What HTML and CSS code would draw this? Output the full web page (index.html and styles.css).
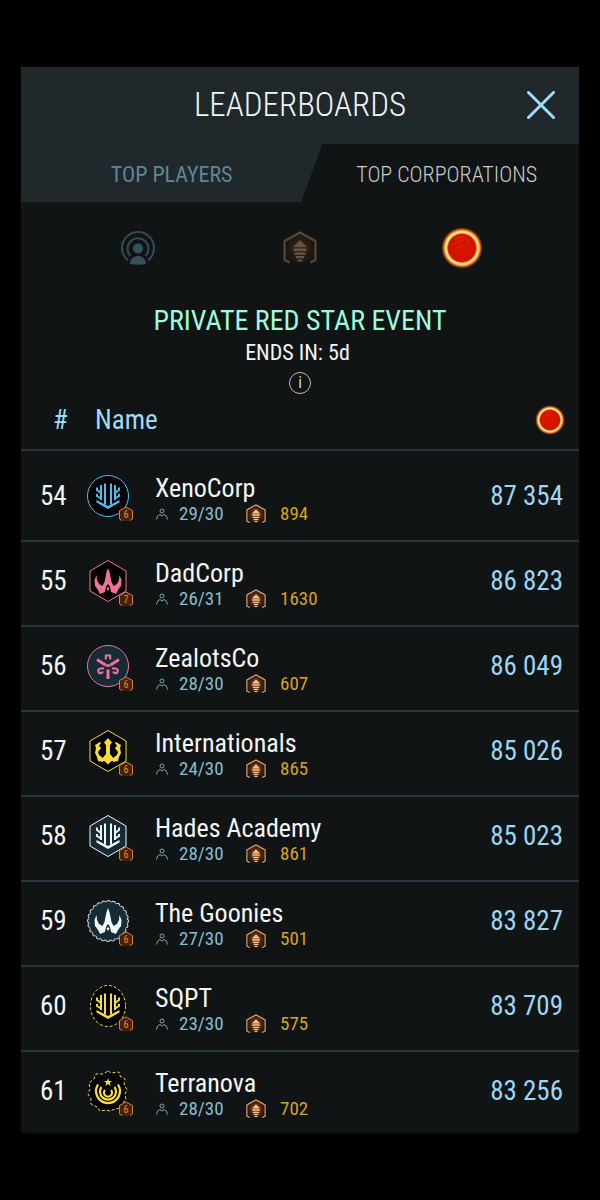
FILE: index.html
```html
<!DOCTYPE html>
<html lang="en">
<head>
<meta charset="utf-8">
<meta name="viewport" content="width=device-width, initial-scale=1">
<title>Leaderboards</title>
<link rel="stylesheet" href="styles.css">
</head>
<body>
<svg class="sprite" aria-hidden="true">
  <defs>
    <radialGradient id="starFill">
      <stop offset="0" stop-color="#dc1600"/>
      <stop offset=".64" stop-color="#d01200"/>
      <stop offset=".69" stop-color="#f0701c"/>
      <stop offset=".73" stop-color="#ffeb98"/>
      <stop offset=".79" stop-color="#ffe08a"/>
      <stop offset=".85" stop-color="#f08a26"/>
      <stop offset=".92" stop-color="#b04606" stop-opacity=".75"/>
      <stop offset="1" stop-color="#601c00" stop-opacity="0"/>
    </radialGradient>
    <radialGradient id="glow">
      <stop offset="0" stop-color="#b4591c" stop-opacity=".9"/>
      <stop offset="1" stop-color="#6a2e0a" stop-opacity=".2"/>
    </radialGradient>
    <symbol id="star" viewBox="0 0 42 42">
      <circle cx="21" cy="21" r="21" fill="url(#starFill)"/>
      <path d="M14 13q4-4 9-3M12 18l4-3M18 14l5-1M25 12l3 3M20 18l-3 3" fill="none" stroke="#f0501c" stroke-width="1.4" opacity=".3"/>
    </symbol>
    <symbol id="influence" viewBox="0 0 34 34">
      <circle cx="17" cy="17" r="16" fill="url(#glow)"/>
      <path d="M6.500 31.500L1.500 29V10L17 1.500L32.500 10V29L27.500 31.500" fill="none" stroke="#e0a071" stroke-width="2"/>
      <path d="M17 9l7 7H10zM10.500 17.500h13v2.500h-13zM11.500 21.500h11v2.200h-11zM13 25h8v2.200h-8zM14.500 28.500h5v2h-5z" fill="#f2c08a"/>
    </symbol>
    <symbol id="person" viewBox="0 0 12 12">
      <circle cx="6" cy="3" r="2" fill="none" stroke="#79a5b5"/>
      <path d="M.5 11.500Q1 7 4 6.500L6 8L8 6.500Q11 7 11.500 11.500" fill="none" stroke="#79a5b5"/>
    </symbol>
    <symbol id="rank" viewBox="0 0 16 16">
      <path d="M8 1l6.500 3.500v8.500L12 15H4l-2.500-2V4.500z" fill="#4a2006"/>
      <path d="M4 14.500L1.500 13V4.500L8 1l6.500 3.500V13L12 14.500" fill="none" stroke="#c98152"/>
    </symbol>

    <path id="circle" d="M21 .5a20.500 20.500 0 1 1 0 41a20.500 20.500 0 1 1 0-41z"/>
    <path id="hexagon" d="M21 .5L39 11V31L21 41.500L3 31V11z"/>

    <g id="trident">
      <path d="M18 8.500v21M24 8.500v21M14 10v15M28 10v15M10 12.500v2.500l4 3M32 12.500v2.500l-4 3M10 19v2l4 2.500M32 19v2l-4 2.500" fill="none" stroke="currentColor" stroke-width="2"/>
      <path d="M9.500 25L21 31l11.500-6v2.500L21 34L9.500 27.500z" fill="currentColor"/>
    </g>
    <path id="phoenix" d="M21 8L19.500 12L18.500 17L17.500 22L15.500 26L12 24L10 20L9.500 15L7.500 20L8 26L11 30L13 34L18 32L18.500 29L19.500 26L21 24L22.500 26L23.500 29L24 32L29 34L31 30L34 26L34.500 20L32.500 15L32 20L30 24L26.500 26L24.500 22L23.500 17L22.500 12ZM19.500 28.500L21 27L22.500 28.500L21 31Z" fill="currentColor"/>
    <g id="crest" fill="currentColor">
      <path d="M21 8l4 4.500-2 2.500v9l3 3.500 1 3-3 1-3 3-3-3-3-1 1-3 3-3.500v-9l-2-2.500z"/>
      <path d="M13 12l1 1-2 3 2 2-3 4 1 3 4 3v4l-5-1-1-4-2-4 1-5-1-3zM29 12l-1 1 2 3-2 2 3 4-1 3-4 3v4l5-1 1-4 2-4-1-5 1-3z"/>
    </g>
    <g id="bloom" fill="none" stroke="currentColor">
      <path d="M21 24.500v9.500M10 14.500l8.500 5.500M32 14.500L23.500 20" stroke-width="3"/>
      <path d="M18.800 14.500v-4h4.400v4" stroke-width="2"/>
      <path d="M18.500 20.500h5" stroke-width="2.500"/>
      <path d="M17 23.500c-4-1-6.500 1-5.500 3.500 1 2 3.500 1.500 4.500-.5M25 23.500c4-1 6.500 1 5.500 3.500-1 2-3.500 1.500-4.500-.5" stroke-width="2"/>
    </g>
    <g id="rings" fill="none" stroke="currentColor" stroke-width="2.200">
      <path d="M11 14.500a12 12 0 1 0 20 0M14.500 17a8 8 0 1 0 13 0M18 20a4 4 0 1 0 6 0"/>
      <path d="M21 8l1 3h3l-2.200 1.800 1 3.200-2.800-2-2.800 2 1-3.200L17 11h3z" fill="currentColor" stroke="none"/>
    </g>
  </defs>
</svg>

<main class="panel">
  <header class="titlebar">
    <h1>LEADERBOARDS</h1>
    <button class="close" type="button" aria-label="Close">
      <svg viewBox="0 0 28 28" aria-hidden="true"><path d="M1.500 1.500l25 25M26.500 1.500l-25 25"/></svg>
    </button>
  </header>

  <div class="tabs" role="tablist">
    <button class="tab tab-players" type="button" role="tab" aria-selected="false">TOP PLAYERS</button>
    <button class="tab tab-corps" type="button" role="tab" aria-selected="true">TOP CORPORATIONS</button>
  </div>

  <div class="filters">
    <button type="button" aria-label="Reach">
      <svg class="reach" viewBox="0 0 34 34" aria-hidden="true">
        <g fill="none" stroke="#334a54" stroke-width="2">
          <path d="M7 29.500A16 16 0 1 1 27 29.500"/>
          <path d="M9.500 25A10.500 10.500 0 1 1 24.500 25"/>
        </g>
        <circle cx="17" cy="17.500" r="5" fill="#36515d"/>
        <path d="M9 33q1-8 8-8t8 8q-8 1.500-16 0z" fill="#36515d"/>
      </svg>
    </button>
    <button type="button" aria-label="Influence"><svg class="dim" aria-hidden="true"><use href="#influence"/></svg></button>
    <button type="button" aria-label="Red star" aria-pressed="true"><svg class="star-large" aria-hidden="true"><use href="#star"/></svg></button>
  </div>

  <section class="event">
    <h2>PRIVATE RED STAR EVENT</h2>
    <p>ENDS IN: 5d</p>
    <button class="info" type="button" aria-label="Event information">i</button>
  </section>

  <table class="board">
    <colgroup><col class="col-rank"><col class="col-emblem"><col><col class="col-score"></colgroup>
    <thead>
      <tr><th class="rank" scope="col">#</th><th class="name-head" colspan="2" scope="col">Name</th><th class="score" scope="col" aria-label="Red star score"><svg class="star-small" aria-hidden="true"><use href="#star"/></svg></th></tr>
    </thead>
    <tbody>
      <tr>
        <td class="rank">54</td>
        <td><svg class="emblem blue" viewBox="0 0 48 48"><use href="#circle" class="plate"/><use href="#trident"/><use href="#rank" x="31" y="31" width="16" height="16"/><text x="39" y="43">6</text></svg></td>
        <td class="corp"><div class="name">XenoCorp</div><div class="meta"><svg class="person"><use href="#person"/></svg><span class="members">29/30</span><svg class="influence"><use href="#influence"/></svg><span class="points">894</span></div></td>
        <td class="score">87 354</td>
      </tr>
      <tr>
        <td class="rank">55</td>
        <td><svg class="emblem pink" viewBox="0 0 48 48"><use href="#hexagon" class="plate"/><use href="#phoenix"/><use href="#rank" x="31" y="31" width="16" height="16"/><text x="39" y="43">7</text></svg></td>
        <td class="corp"><div class="name">DadCorp</div><div class="meta"><svg class="person"><use href="#person"/></svg><span class="members">26/31</span><svg class="influence"><use href="#influence"/></svg><span class="points">1630</span></div></td>
        <td class="score">86 823</td>
      </tr>
      <tr>
        <td class="rank">56</td>
        <td><svg class="emblem pink slate" viewBox="0 0 48 48"><use href="#circle" class="plate"/><use href="#bloom"/><use href="#rank" x="31" y="31" width="16" height="16"/><text x="39" y="43">6</text></svg></td>
        <td class="corp"><div class="name">ZealotsCo</div><div class="meta"><svg class="person"><use href="#person"/></svg><span class="members">28/30</span><svg class="influence"><use href="#influence"/></svg><span class="points">607</span></div></td>
        <td class="score">86 049</td>
      </tr>
      <tr>
        <td class="rank">57</td>
        <td><svg class="emblem yellow" viewBox="0 0 48 48"><use href="#hexagon" class="plate"/><use href="#crest"/><use href="#rank" x="31" y="31" width="16" height="16"/><text x="39" y="43">6</text></svg></td>
        <td class="corp"><div class="name">Internationals</div><div class="meta"><svg class="person"><use href="#person"/></svg><span class="members">24/30</span><svg class="influence"><use href="#influence"/></svg><span class="points">865</span></div></td>
        <td class="score">85 026</td>
      </tr>
      <tr>
        <td class="rank">58</td>
        <td><svg class="emblem white slate" viewBox="0 0 48 48"><use href="#hexagon" class="plate"/><use href="#trident"/><use href="#rank" x="31" y="31" width="16" height="16"/><text x="39" y="43">6</text></svg></td>
        <td class="corp"><div class="name">Hades Academy</div><div class="meta"><svg class="person"><use href="#person"/></svg><span class="members">28/30</span><svg class="influence"><use href="#influence"/></svg><span class="points">861</span></div></td>
        <td class="score">85 023</td>
      </tr>
      <tr>
        <td class="rank">59</td>
        <td><svg class="emblem white slate" viewBox="0 0 48 48"><circle class="scallop" cx="21" cy="21" r="18.500"/><circle class="scallop-fill" cx="21" cy="21" r="18.500"/><circle class="backing" cx="21" cy="21" r="19"/><use href="#phoenix"/><use href="#rank" x="31" y="31" width="16" height="16"/><text x="39" y="43">6</text></svg></td>
        <td class="corp"><div class="name">The Goonies</div><div class="meta"><svg class="person"><use href="#person"/></svg><span class="members">27/30</span><svg class="influence"><use href="#influence"/></svg><span class="points">501</span></div></td>
        <td class="score">83 827</td>
      </tr>
      <tr>
        <td class="rank">60</td>
        <td><svg class="emblem yellow dashed" viewBox="0 0 48 48"><ellipse class="plate" cx="21" cy="21" rx="17.500" ry="20.500"/><use href="#trident"/><use href="#rank" x="31" y="31" width="16" height="16"/><text x="39" y="43">6</text></svg></td>
        <td class="corp"><div class="name">SQPT</div><div class="meta"><svg class="person"><use href="#person"/></svg><span class="members">23/30</span><svg class="influence"><use href="#influence"/></svg><span class="points">575</span></div></td>
        <td class="score">83 709</td>
      </tr>
      <tr>
        <td class="rank">61</td>
        <td><svg class="emblem yellow dashed" viewBox="0 0 48 48"><path class="plate" d="M21 1l3 2 8-1 1 4 5 3-1 5 3 6-2 4 1 6-4 3-2 5-5 1-5 2-4-1-6 1-3-4-6-3v-5l-3-5 2-5-1-6 5-4 2-5 7 0z"/><use href="#rings"/><use href="#rank" x="31" y="31" width="16" height="16"/><text x="39" y="43">6</text></svg></td>
        <td class="corp"><div class="name">Terranova</div><div class="meta"><svg class="person"><use href="#person"/></svg><span class="members">28/30</span><svg class="influence"><use href="#influence"/></svg><span class="points">702</span></div></td>
        <td class="score">83 256</td>
      </tr>
    </tbody>
  </table>
</main>
</body>
</html>
```

FILE: styles.css
```css
* { box-sizing: border-box; }

body {
  margin: 0;
  padding: 67px 21px;
  background: #000;
  color: #f4f6f6;
  font-family: "Roboto Condensed", Roboto, "Liberation Sans", sans-serif;
}

button {
  padding: 0;
  border: 0;
  background: none;
  color: inherit;
  font: inherit;
  cursor: pointer;
}

svg { display: block; }

.sprite { position: absolute; width: 0; height: 0; }

.panel { background: #101415; }

.titlebar {
  display: grid;
  grid-template-columns: 60px 1fr 60px;
  align-items: center;
  height: 77px;
  padding: 0 8px 2px;
  background: #20282c;
}

.titlebar h1 {
  grid-column: 2;
  margin: 0;
  font-size: 33px;
  font-weight: 300;
  line-height: 40px;
  text-align: center;
}

.close { justify-self: center; }

.close svg {
  width: 28px;
  height: 28px;
  fill: none;
  stroke: #99ddfa;
  stroke-width: 3;
  stroke-linecap: round;
}

.tabs { display: flex; height: 58px; }

.tab { padding-top: 4px; font-size: 22px; line-height: 28px; }

.tab-players {
  flex: 0 0 54%;
  background: #20282c;
  color: #5d8796;
  clip-path: polygon(0 0, 100% 0, calc(100% - 21px) 100%, 0 100%);
}

.tab-corps { flex: 1; padding-right: 8px; color: #c8cccc; font-weight: 300; }

.filters {
  display: grid;
  grid-template-columns: repeat(3, 1fr);
  width: 87%;
  height: 92px;
  margin: 0 auto;
  justify-items: center;
  align-items: center;
}

.reach, .dim { width: 34px; height: 34px; }
.dim { opacity: .38; }
.star-large { width: 42px; height: 42px; }
.star-small { width: 30px; height: 30px; margin-left: auto; }

.event {
  display: flex;
  flex-direction: column;
  align-items: center;
  padding-top: 10px;
}

.event h2 {
  margin: 0;
  color: #9dfbdc;
  font-size: 28px;
  font-weight: 400;
  line-height: 34px;
}

.event p { margin: 0; padding-right: 5px; font-size: 22px; line-height: 30px; }

.info {
  width: 22px;
  height: 22px;
  margin-top: 4px;
  border: 1px solid #b8bcbc;
  border-radius: 50%;
  color: #d8dcdc;
  font-size: 16px;
  line-height: 18px;
}

.board { width: 100%; border-collapse: collapse; table-layout: fixed; }

.col-rank { width: 66px; }
.col-emblem { width: 68px; }
.col-score { width: 120px; }

.board th, .board td { padding: 0; text-align: left; font-weight: 400; }

.board th {
  height: 56px;
  padding-bottom: 4px;
  border-bottom: 2px solid #2b3539;
  color: #9bdcf8;
  font-size: 27px;
  line-height: 34px;
}

.board td { height: 85px; padding-bottom: 6px; border-bottom: 2px solid #27363a; }
.board tbody tr:first-child td { height: 91px; padding-top: 6px; }
.board tbody tr:last-child td { height: 82px; padding-bottom: 4px; border-bottom: 0; }

.board .rank { padding-left: 19px; font-size: 27px; }
.board th.rank { padding-left: 32px; }
.board .name-head { padding-left: 8px; }

.board .score {
  padding-right: 16px;
  color: #9cd6f2;
  font-size: 27px;
  text-align: right;
  white-space: nowrap;
}

.board th.score { padding-right: 14px; }

.corp .name { padding-top: 8px; }

.name { font-size: 26px; line-height: 28px; white-space: nowrap; }

.meta { display: flex; align-items: center; font-size: 19px; line-height: 24px; }
.person { width: 12px; height: 12px; margin-left: 1px; }
.members { width: 78px; padding-left: 11px; color: #87bdd0; }
.influence { width: 20px; height: 20px; }
.points { padding-left: 14px; color: #d6a31c; }

.emblem { width: 48px; height: 48px; margin-top: 6px; }
.emblem .plate { fill: #000; stroke: currentColor; stroke-width: 1; }
.emblem.slate .plate, .backing { fill: #152b36; }
.dashed .plate { stroke-dasharray: 3 2; }
.emblem text { fill: #f08a1c; font-size: 10px; text-anchor: middle; }
.scallop, .scallop-fill { fill: none; stroke-linecap: round; stroke-dasharray: 0 4.843; }
.scallop { stroke: #c9d6da; stroke-width: 5; }
.scallop-fill { stroke: #152b36; stroke-width: 3; }
.blue { color: #4dbdf0; }
.pink { color: #f5709a; }
.yellow { color: #f7dc3c; }
.white { color: #f2f7f8; }
```
